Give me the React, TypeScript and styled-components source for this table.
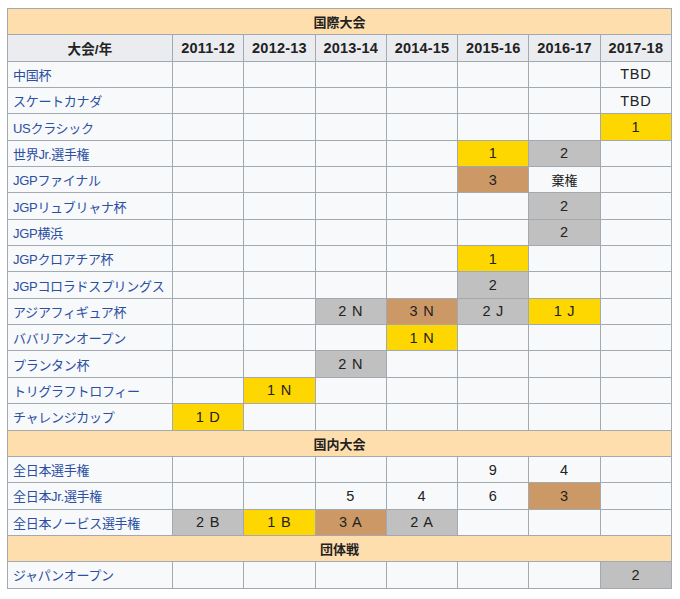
import React from "react";
import styled, { createGlobalStyle } from "styled-components";

const Global = createGlobalStyle`
  html, body { margin: 0; padding: 0; background: #ffffff; }
  body { font-family: "Liberation Sans", "Noto Sans CJK JP", sans-serif; }
`;

const Page = styled.div`
  padding: 8px 8px 0 7px;
`;

const Table = styled.table`
  width: 665px;
  table-layout: fixed;
  border-collapse: collapse;
  background: #f8f9fa;
  color: #222222;
  font-size: 13px;
  border: 1px solid #a2a9b1;
`;

const Row = styled.tr`
  height: 26.35px;
`;

const SectionCell = styled.th`
  background: #ffdead;
  border: 1px solid #a2a9b1;
  font-weight: bold;
  text-align: center;
  padding: 0;
`;

const HeadCell = styled.th<{ $cjk?: boolean }>`
  background: #eaecf0;
  border: 1px solid #a2a9b1;
  font-weight: bold;
  font-size: ${(p) => (p.$cjk ? "13.5px" : "14.5px")};
  letter-spacing: 0.2px;
  text-align: center;
  padding: 0;
`;

const NameCell = styled.td`
  border: 1px solid #a2a9b1;
  padding: 0 0 0 5px;
  text-align: left;
  white-space: nowrap;
  letter-spacing: -0.3px;
`;

const Link = styled.span`
  color: #2a4fa3;
`;

type Medal = "g" | "s" | "b" | undefined;

const medalColor: Record<string, string> = {
  g: "#ffd700",
  s: "#c0c0c0",
  b: "#cc9966",
};

const ValueCell = styled.td<{ $medal?: Medal; $cjk?: boolean }>`
  border: 1px solid #a2a9b1;
  padding: 0;
  text-align: center;
  font-size: ${(p) => (p.$cjk ? "13px" : "14.5px")};
  letter-spacing: ${(p) => (p.$cjk ? "0" : "0.8px")};
  background: ${(p) => (p.$medal ? medalColor[p.$medal] : "#f8f9fa")};
  white-space: pre;
`;

type Cell = [string, Medal] | null;

const years = ["2011-12", "2012-13", "2013-14", "2014-15", "2015-16", "2016-17", "2017-18"];

const e: Cell = null;

const intl: [string, Cell[]][] = [
  ["中国杯", [e, e, e, e, e, e, ["TBD", undefined]]],
  ["スケートカナダ", [e, e, e, e, e, e, ["TBD", undefined]]],
  ["USクラシック", [e, e, e, e, e, e, ["1", "g"]]],
  ["世界Jr.選手権", [e, e, e, e, ["1", "g"], ["2", "s"], e]],
  ["JGPファイナル", [e, e, e, e, ["3", "b"], ["棄権", undefined], e]],
  ["JGPリュブリャナ杯", [e, e, e, e, e, ["2", "s"], e]],
  ["JGP横浜", [e, e, e, e, e, ["2", "s"], e]],
  ["JGPクロアチア杯", [e, e, e, e, ["1", "g"], e, e]],
  ["JGPコロラドスプリングス", [e, e, e, e, ["2", "s"], e, e]],
  ["アジアフィギュア杯", [e, e, ["2 N", "s"], ["3 N", "b"], ["2 J", "s"], ["1 J", "g"], e]],
  ["ババリアンオープン", [e, e, e, ["1 N", "g"], e, e, e]],
  ["プランタン杯", [e, e, ["2 N", "s"], e, e, e, e]],
  ["トリグラフトロフィー", [e, ["1 N", "g"], e, e, e, e, e]],
  ["チャレンジカップ", [["1 D", "g"], e, e, e, e, e, e]],
];

const domestic: [string, Cell[]][] = [
  ["全日本選手権", [e, e, e, e, ["9", undefined], ["4", undefined], e]],
  ["全日本Jr.選手権", [e, e, ["5", undefined], ["4", undefined], ["6", undefined], ["3", "b"], e]],
  ["全日本ノービス選手権", [["2 B", "s"], ["1 B", "g"], ["3 A", "b"], ["2 A", "s"], e, e, e]],
];

const team: [string, Cell[]][] = [
  ["ジャパンオープン", [e, e, e, e, e, e, ["2", "s"]]],
];

const isCjk = (s: string) => /[\u3000-\u9fff]/.test(s);

const DataRows: React.FC<{ rows: [string, Cell[]][] }> = ({ rows }) => (
  <>
    {rows.map(([name, cells]) => (
      <Row key={name}>
        <NameCell>
          <Link>{name}</Link>
        </NameCell>
        {cells.map((c, i) => (
          <ValueCell key={i} $medal={c ? c[1] : undefined} $cjk={c ? isCjk(c[0]) : false}>
            {c ? c[0] : ""}
          </ValueCell>
        ))}
      </Row>
    ))}
  </>
);

const Section: React.FC<{ title: string }> = ({ title }) => (
  <Row>
    <SectionCell colSpan={8}>{title}</SectionCell>
  </Row>
);

export default function App() {
  return (
    <Page>
      <Global />
      <Table>
        <colgroup>
          <col style={{ width: 165 }} />
          {years.map((y) => (
            <col key={y} />
          ))}
        </colgroup>
        <tbody>
          <Section title="国際大会" />
          <Row>
            <HeadCell $cjk>大会/年</HeadCell>
            {years.map((y) => (
              <HeadCell key={y}>{y}</HeadCell>
            ))}
          </Row>
          <DataRows rows={intl} />
          <Section title="国内大会" />
          <DataRows rows={domestic} />
          <Section title="団体戦" />
          <DataRows rows={team} />
        </tbody>
      </Table>
    </Page>
  );
}
